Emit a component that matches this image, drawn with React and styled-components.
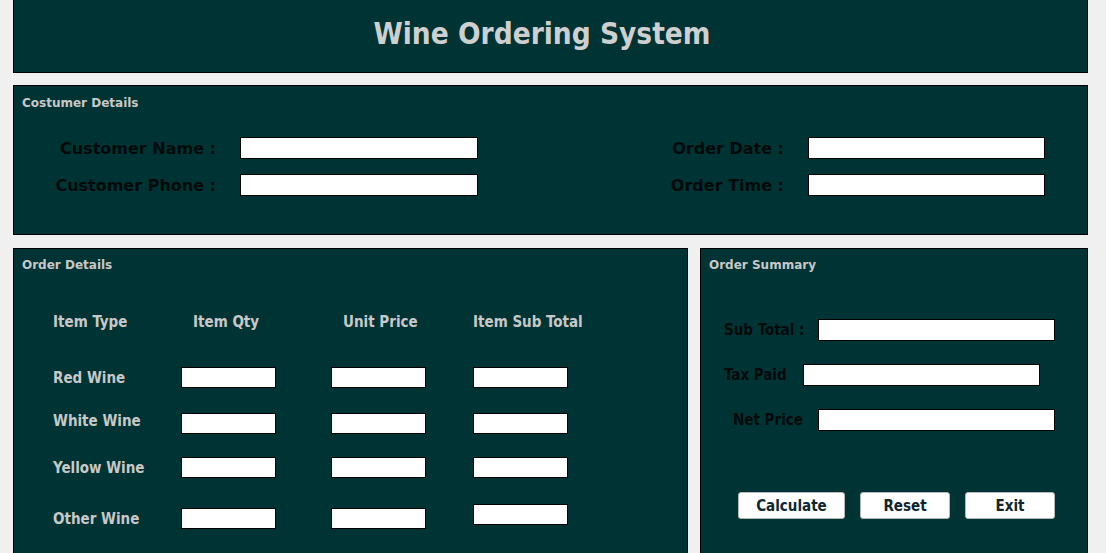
import React from "react";
import styled, { createGlobalStyle } from "styled-components";

const Global = createGlobalStyle`
  html, body { margin: 0; padding: 0; background: #f0f0f0; }
  body { font-family: "DejaVu Sans Condensed", "DejaVu Sans", sans-serif; }
  * { box-sizing: border-box; }
`;

const Page = styled.div`
  width: 1106px;
  height: 553px;
  overflow: hidden;
  padding-left: 13px;
  display: flex;
  flex-direction: column;
`;

const Header = styled.header`
  flex: none;
  width: 1075px;
  height: 73px;
  background: #003333;
  border: 1px solid #000;
  border-top: 0;
  display: flex;
  align-items: center;
  justify-content: center;
  padding-right: 17px;
`;

const AppTitle = styled.h1`
  margin: 0;
  font-family: "DejaVu Sans Condensed", "DejaVu Sans", sans-serif;
  font-stretch: condensed;
  font-weight: bold;
  font-size: 29.5px;
  color: #cfcfcf;
  line-height: 1;
  padding-bottom: 2px;
`;

const Panel = styled.section`
  background: #003333;
  border: 1px solid #000;
  width: ${(p) => p.$w}px;
  height: ${(p) => p.$h}px;
  flex: none;
`;

const PanelTitle = styled.div`
  font-family: "DejaVu Sans", sans-serif;
  font-weight: bold;
  font-size: 12px;
  line-height: 14px;
  color: #c8c8c8;
  padding: ${(p) => p.$pt || 10}px 0 0 8px;
`;

const CustomerGrid = styled.div`
  display: grid;
  grid-template-columns: 202px 238px 282px 237px;
  column-gap: 24px;
  row-gap: 15px;
  margin-top: 27px;
  align-items: center;
`;

const DarkLabel = styled.label`
  font-family: "DejaVu Sans", sans-serif;
  font-weight: bold;
  font-size: 16px;
  color: #020a0a;
  text-align: right;
  white-space: nowrap;
`;

const Field = styled.input`
  display: block;
  width: ${(p) => p.$w}px;
  height: ${(p) => p.$h || 22}px;
  border: 1px solid #000;
  background: #fff;
  padding: 0 3px;
  margin: 0;
  outline: none;
  font-size: 13px;
`;

const Gap = styled.div`
  height: ${(p) => p.$h}px;
  flex: none;
`;

const BottomRow = styled.div`
  display: flex;
  gap: 12px;
  flex: none;
`;

const OrderBody = styled.div`
  padding-left: 39px;
  display: flex;
  flex-direction: column;
`;

const ItemRow = styled.div`
  display: grid;
  grid-template-columns: 128px 150px 142px 95px;
  align-items: center;
  height: ${(p) => p.$h || 21}px;
  margin-top: ${(p) => p.$mt}px;
`;

const LightLabel = styled.span`
  font-family: "DejaVu Sans Condensed", "DejaVu Sans", sans-serif;
  font-stretch: condensed;
  font-weight: bold;
  font-size: 15px;
  color: #c8c8c8;
  white-space: nowrap;
  padding-left: ${(p) => p.$indent || 0}px;
  margin-bottom: ${(p) => p.$lift || 0}px;
`;

const SmallField = styled(Field)`
  width: 95px;
  height: 21px;
  margin-bottom: ${(p) => p.$lift || 0}px;
`;

const SummaryRow = styled.div`
  display: flex;
  align-items: center;
  padding-left: ${(p) => p.$pl}px;
  margin-top: ${(p) => p.$mt}px;
`;

const SummaryLabel = styled.span`
  font-family: "DejaVu Sans Condensed", "DejaVu Sans", sans-serif;
  font-stretch: condensed;
  font-weight: bold;
  font-size: 15px;
  color: #020a0a;
  width: ${(p) => p.$w}px;
  white-space: nowrap;
`;

const ButtonBar = styled.div`
  display: flex;
  gap: 15px;
  padding-left: 37px;
  margin-top: 61px;
`;

const Button = styled.button`
  width: ${(p) => p.$w}px;
  height: 27px;
  background: #ffffff;
  border: 1px solid #b8b8b8;
  border-radius: 3px;
  font-family: "DejaVu Sans Condensed", "DejaVu Sans", sans-serif;
  font-stretch: condensed;
  font-weight: bold;
  font-size: 15px;
  color: #0d2630;
  padding: 0;
  cursor: pointer;
`;

const items = [
  { name: "Red Wine", mt: 36 },
  { name: "White Wine", mt: 24, lift: 4 },
  { name: "Yellow Wine", mt: 24 },
  { name: "Other Wine", mt: 26, subLift: 8 },
];

export default function App() {
  return (
    <>
      <Global />
      <Page>
        <Header>
          <AppTitle>Wine Ordering System</AppTitle>
        </Header>
        <Gap $h={12} />
        <Panel $w={1075} $h={150}>
          <PanelTitle>Costumer Details</PanelTitle>
          <CustomerGrid>
            <DarkLabel>Customer Name :</DarkLabel>
            <Field $w={238} />
            <DarkLabel>Order Date :</DarkLabel>
            <Field $w={237} />
            <DarkLabel>Customer Phone :</DarkLabel>
            <Field $w={238} />
            <DarkLabel>Order Time :</DarkLabel>
            <Field $w={237} />
          </CustomerGrid>
        </Panel>
        <Gap $h={13} />
        <BottomRow>
          <Panel $w={675} $h={330}>
            <PanelTitle $pt={9}>Order Details</PanelTitle>
            <OrderBody>
              <ItemRow $mt={41} $h={18}>
                <LightLabel>Item Type</LightLabel>
                <LightLabel $indent={12}>Item Qty</LightLabel>
                <LightLabel $indent={12}>Unit Price</LightLabel>
                <LightLabel>Item Sub Total</LightLabel>
              </ItemRow>
              {items.map((it) => (
                <ItemRow key={it.name} $mt={it.mt}>
                  <LightLabel $lift={it.lift}>{it.name}</LightLabel>
                  <SmallField />
                  <SmallField />
                  <SmallField $lift={it.subLift} />
                </ItemRow>
              ))}
            </OrderBody>
          </Panel>
          <Panel $w={388} $h={330}>
            <PanelTitle $pt={9}>Order Summary</PanelTitle>
            <SummaryRow $pl={23} $mt={47}>
              <SummaryLabel $w={94}>Sub Total :</SummaryLabel>
              <Field $w={237} />
            </SummaryRow>
            <SummaryRow $pl={23} $mt={23}>
              <SummaryLabel $w={79}>Tax Paid</SummaryLabel>
              <Field $w={237} />
            </SummaryRow>
            <SummaryRow $pl={32} $mt={23}>
              <SummaryLabel $w={85}>Net Price</SummaryLabel>
              <Field $w={237} />
            </SummaryRow>
            <ButtonBar>
              <Button $w={107}>Calculate</Button>
              <Button $w={90}>Reset</Button>
              <Button $w={90}>Exit</Button>
            </ButtonBar>
          </Panel>
        </BottomRow>
      </Page>
    </>
  );
}
